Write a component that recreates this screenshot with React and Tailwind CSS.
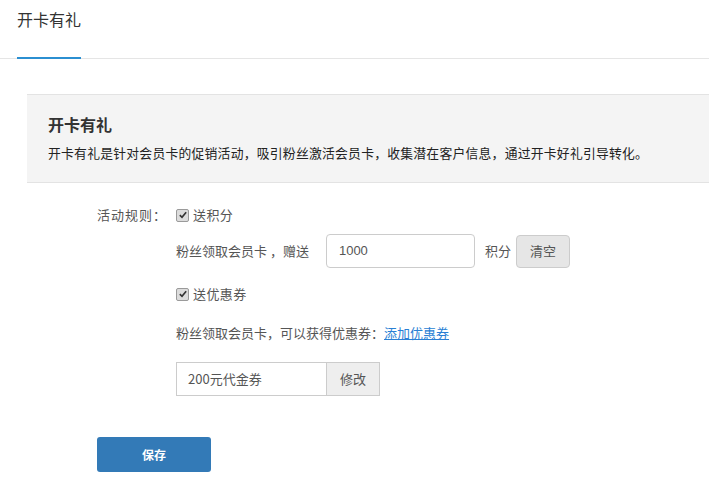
import React from "react"

const font = { fontFamily: '"Microsoft YaHei", "Noto Sans CJK SC", "Liberation Sans", sans-serif' }

function Check() {
  return (
    <span className="inline-flex h-[13px] w-[13px] items-center justify-center rounded-[2px] border border-[#9a9a9a] bg-[#dcdcdc]">
      <svg viewBox="0 0 12 12" className="h-[10px] w-[10px]">
        <path d="M2.2 6.2 L4.8 8.8 L9.8 2.8" fill="none" stroke="#333" strokeWidth="2" />
      </svg>
    </span>
  )
}

export default function App() {
  return (
    <div className="h-[489px] w-[709px] overflow-hidden bg-white text-[#333]" style={font}>
      <div className="flex border-b border-[#e5e5e5] pl-[17px]">
        <div className="-mb-px flex h-[59px] items-start border-b-2 border-[#2b8fd1] pt-[9px] text-[16px] leading-[20px] text-[#333]">
          开卡有礼
        </div>
      </div>

      <div className="ml-[27px] mt-[35px] h-[89px] w-[720px] border-y border-[#e3e3e3] bg-[#f4f4f4] pl-[21px] pt-[18px]">
        <div className="text-[16px] font-semibold leading-[22px] text-[#333]">开卡有礼</div>
        <div className="mt-[9px] text-[12.8px] leading-[18px] tracking-[0.25px] text-[#222]">
          开卡有礼是针对会员卡的促销活动，吸引粉丝激活会员卡，收集潜在客户信息，通过开卡好礼引导转化。
        </div>
      </div>

      <div className="mt-[22px] flex pl-[97px] text-[13px] text-[#555]">
        <div className="w-[79px] leading-[20px] tracking-[1px]">活动规则：</div>
        <div className="flex flex-col">
          <label className="flex h-[20px] items-center gap-[4px]">
            <Check />
            <span className="tracking-[0.4px]">送积分</span>
          </label>
          <div className="mt-[9px] flex items-center">
            <span className="whitespace-pre">粉丝领取会员卡 ，赠送</span>
            <div className="ml-[17px] flex h-[34px] w-[149px] items-center rounded-[4px] border border-[#ccc] bg-white pl-[12px] text-[13px] text-[#555]" style={{ fontFamily: '"Liberation Sans", sans-serif' }}>
              1000
            </div>
            <span className="ml-[10px]">积分</span>
            <button className="ml-[5px] h-[33px] w-[54px] rounded-[4px] border border-[#ccc] bg-[#e6e6e6] text-[13px] text-[#555]">
              清空
            </button>
          </div>
          <label className="mt-[16px] flex h-[20px] items-center gap-[4px]">
            <Check />
            <span className="tracking-[0.4px]">送优惠券</span>
          </label>
          <div className="mt-[19px] h-[20px] leading-[20px]">
            粉丝领取会员卡，可以获得优惠券：
            <a className="text-[#2a7fd4] underline">添加优惠券</a>
          </div>
          <div className="mt-[19px] flex h-[34px] w-[204px] border border-[#ccc]">
            <div className="flex flex-1 items-center bg-white pl-[11px]">200元代金券</div>
            <div className="flex w-[53px] items-center justify-center border-l border-[#ccc] bg-[#eee]">修改</div>
          </div>
        </div>
      </div>

      <div className="ml-[97px] mt-[41px]">
        <button className="h-[35px] w-[114px] rounded-[3px] bg-[#337ab7] text-[12px] font-bold text-white">保存</button>
      </div>
    </div>
  )
}
